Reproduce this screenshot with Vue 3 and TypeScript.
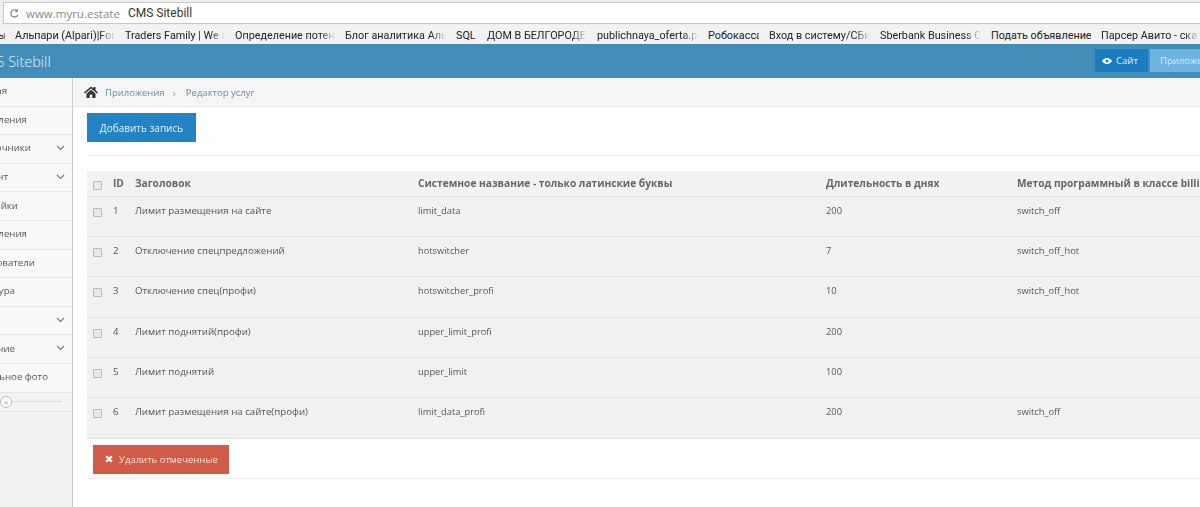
<script setup lang="ts">
interface MenuItem { label: string; end: number; chevron?: boolean }
const menu: MenuItem[] = [
  { label: 'Главная', end: 7 },
  { label: 'Объявления', end: 27 },
  { label: 'Справочники', end: 31, chevron: true },
  { label: 'Контент', end: 8, chevron: true },
  { label: 'Настройки', end: 18 },
  { label: 'Объявления', end: 27 },
  { label: 'Пользователи', end: 35 },
  { label: 'Структура', end: 15 },
  { label: '', end: 0, chevron: true },
  { label: 'Управление', end: 15, chevron: true },
  { label: 'Уникальное фото', end: 48 },
]
const bookmarks = [
  { t: 'ы', w: 5, fade: false },
  { t: 'Альпари (Alpari)|Forex', w: 100, fade: true },
  { t: 'Traders Family | We are', w: 100, fade: true },
  { t: 'Определение потенциала', w: 100, fade: true },
  { t: 'Блог аналитика Альфа', w: 101, fade: true },
  { t: 'SQL', w: 21, fade: false },
  { t: 'ДОМ В БЕЛГОРОДЕ', w: 100, fade: true },
  { t: 'publichnaya_oferta.pdf', w: 101, fade: true },
  { t: 'Робокасса', w: 51, fade: false },
  { t: 'Вход в систему/СБиС', w: 101, fade: true },
  { t: 'Sberbank Business Online', w: 101, fade: true },
  { t: 'Подать объявление', w: 100, fade: false },
  { t: 'Парсер Авито - скачать', w: 98, fade: true },
]
const rows = [
  ['1', 'Лимит размещения на сайте', 'limit_data', '200', 'switch_off'],
  ['2', 'Отключение спецпредложений', 'hotswitcher', '7', 'switch_off_hot'],
  ['3', 'Отключение спец(профи)', 'hotswitcher_profi', '10', 'switch_off_hot'],
  ['4', 'Лимит поднятий(профи)', 'upper_limit_profi', '200', ''],
  ['5', 'Лимит поднятий', 'upper_limit', '100', ''],
  ['6', 'Лимит размещения на сайте(профи)', 'limit_data_profi', '200', 'switch_off'],
]
</script>

<template>
  <div class="page">
    <div class="address">
      <div class="addr-box">
        <svg class="reload" width="11" height="11" viewBox="0 0 12 12"><path d="M9.600 7.600A4 4 0 1 1 8.800 3" fill="none" stroke="#777" stroke-width="1.200"/><path d="M9.600 0.800v3.400H6.400z" fill="#777"/></svg>
        <span class="url">www.myru.estate</span>
        <span class="title">CMS Sitebill</span>
      </div>
    </div>
    <div class="bookmarks">
      <span v-for="b in bookmarks" :key="b.t" class="bm" :class="{ fade: b.fade }" :style="{ width: b.w + 'px' }">{{ b.t }}</span>
    </div>
    <header class="navbar">
      <span class="brand">CMS Sitebill</span>
      <div class="nav-right">
        <span class="nav-site">
          <svg width="10" height="8" viewBox="0 0 10 8"><path d="M0 4C2.500 0 7.500 0 10 4C7.500 8 2.500 8 0 4Z" fill="#fff"/><circle cx="5" cy="4" r="1.500" fill="#1b7cc0"/></svg>
          Сайт
        </span>
        <span class="nav-app">Приложения</span>
      </div>
    </header>
    <div class="body">
      <aside class="sidebar">
        <div v-for="(m, i) in menu" :key="i" class="menu-item">
          <span class="menu-label" :style="{ width: m.end + 'px' }">{{ m.label }}</span>
          <svg v-if="m.chevron" class="chev" width="9" height="6" viewBox="0 0 9 6"><path d="M1 1l3.500 3.500L8 1" fill="none" stroke="#777" stroke-width="1.100"/></svg>
        </div>
        <div class="collapse">
          <span class="collapse-btn">«</span>
        </div>
      </aside>
      <main class="main">
        <div class="crumbs">
          <svg width="14" height="12" viewBox="0 0 14 12"><path d="M7 0.500L0 6.500l1 1L7 2.500l6 5 1-1-2.500-2.200V1h-2v1.600z" fill="#333"/><path d="M2.500 7.700L7 3.800l4.500 3.900V12H8.300V8.500H5.700V12H2.500z" fill="#333"/></svg>
          <span class="crumb first">Приложения</span>
          <span class="sep">›</span>
          <span class="crumb">Редактор услуг</span>
        </div>
        <div class="toolbar"><button class="btn-add">Добавить запись</button></div>
        <div class="content">
          <table class="grid">
            <colgroup>
              <col class="c1"><col class="c2"><col class="c3"><col class="c4"><col class="c5"><col class="c6">
            </colgroup>
            <thead>
              <tr>
                <th><span class="check"></span></th>
                <th>ID</th>
                <th>Заголовок</th>
                <th>Системное название - только латинские буквы</th>
                <th>Длительность в днях</th>
                <th>Метод программный в классе billing</th>
              </tr>
            </thead>
            <tbody>
              <tr v-for="r in rows" :key="r[0]">
                <td><span class="check"></span></td>
                <td>{{ r[0] }}</td>
                <td class="name">{{ r[1] }}</td>
                <td class="code">{{ r[2] }}</td>
                <td class="code">{{ r[3] }}</td>
                <td class="code">{{ r[4] }}</td>
              </tr>
            </tbody>
          </table>
          <div class="actions">
            <button class="btn-del">
              <svg width="8" height="8" viewBox="0 0 8 8"><path d="M1.200 1.200L6.800 6.800M6.800 1.200L1.200 6.800" stroke="#fff" stroke-width="2.200"/></svg>
              Удалить отмеченные
            </button>
          </div>
        </div>
      </main>
    </div>
  </div>
</template>

<style>
html, body { margin: 0; padding: 0; background: #fff; overflow: hidden; }
</style>

<style scoped>
.page { width: 1200px; height: 507px; overflow: hidden; font-family: "Open Sans", "Noto Sans", sans-serif; font-size: 10px; color: #555; display: flex; flex-direction: column; filter: blur(0.4px); }
.address { height: 25px; box-sizing: border-box; background: #eee; padding: 2px 0 0 3px; flex: none; }
.addr-box { height: 22px; box-sizing: border-box; background: #fff; border: 1px solid #c8c8c8; border-right: 0; display: flex; align-items: center; padding-left: 5px; }
.reload { margin-right: 6px; }
.url { font-size: 11.500px; color: #888; margin-right: 8px; }
.title { font-family: Roboto, sans-serif; font-size: 12px; color: #333; }
.bookmarks { height: 19px; box-sizing: border-box; padding-top: 2px; flex: none; background: #f2f2f2; display: flex; align-items: center; gap: 10px; overflow: hidden; white-space: nowrap; font-family: Roboto, sans-serif; font-size: 10.800px; color: #222; }
.bm { flex: none; overflow: hidden; }
.bm:first-child { text-indent: -2px; }
.fade { -webkit-mask-image: linear-gradient(to right, #000 85%, transparent); mask-image: linear-gradient(to right, #000 85%, transparent); }
.navbar { height: 34px; flex: none; background: #438eb9; display: flex; align-items: center; justify-content: space-between; }
.brand { font-size: 14.500px; color: #e4f0f7; margin-left: -25px; font-weight: 300; }
.nav-right { display: flex; align-items: stretch; height: 23px; gap: 2px; align-self: flex-end; margin-bottom: 6px; }
.nav-site { width: 53px; box-sizing: border-box; padding-right: 3px; background: #1b7cc0; color: #e4f0f7; font-size: 9.500px; display: flex; align-items: center; justify-content: center; gap: 4px; }
.nav-app { width: 50px; background: #6fb3e0; color: #d5e9f6; font-size: 9.500px; white-space: nowrap; overflow: hidden; padding-left: 10px; box-sizing: border-box; display: flex; align-items: center; }
.body { flex: 1; display: flex; min-height: 0; }
.sidebar { width: 73px; flex: none; box-sizing: border-box; background: #f2f2f2; border-right: 1px solid #ccc; }
.menu-item { height: 28.600px; box-sizing: border-box; background: #f8f8f8; border-bottom: 1px solid #e5e5e5; display: flex; align-items: center; padding-bottom: 2px; position: relative; color: #585858; font-size: 9.700px; }
.menu-label { display: flex; justify-content: flex-end; overflow: hidden; white-space: nowrap; }
.chev { position: absolute; left: 56px; top: 10px; }
.collapse { height: 19px; box-sizing: border-box; border-bottom: 1px solid #e5e5e5; display: flex; align-items: center; background: #f3f3f3; position: relative; }
.collapse::before { content: ""; position: absolute; left: 12px; right: 10px; top: 8px; border-top: 1px solid #ddd; }
.collapse-btn { width: 12px; height: 12px; border: 1px solid #bbb; border-radius: 50%; background: #fff; font-size: 9px; line-height: 9px; text-align: center; color: #aaa; box-sizing: border-box; }
.main { flex: 1; min-width: 0; overflow: hidden; }
.crumbs { height: 29px; box-sizing: border-box; background: #f5f5f5; border-bottom: 1px solid #e5e5e5; display: flex; align-items: center; padding-left: 11px; font-size: 9.500px; color: #6a8ca6; }
.crumb.first { margin-left: 7px; }
.sep { margin: 0 10px 0 8px; color: #aaa; font-size: 11px; }
.toolbar { height: 49px; box-sizing: border-box; margin-left: 14px; padding-top: 6px; border-bottom: 1px solid #eee; }
.btn-add { width: 109px; height: 29px; background: #2283c5; border: 0; color: #eaf4fb; font: 10px "Open Sans", sans-serif; padding: 0; display: block; }
.content { margin-left: 14px; padding-top: 15px; }
.grid { border-collapse: collapse; table-layout: fixed; width: 1225px; background: #f1f1f1; font-size: 9.600px; color: #555; }
.c1 { width: 21px; }
.c2 { width: 22px; }
.c3 { width: 283px; }
.c4 { width: 408px; }
.c5 { width: 191px; }
.c6 { width: 300px; }
.grid th { height: 25px; padding: 0 0 0 5px; text-align: left; font-weight: 700; color: #666; background: #f2f2f2; border-bottom: 1px solid #e2e2e2; box-sizing: border-box; font-size: 10.200px; white-space: nowrap; }
.grid td { height: 40.400px; padding: 7px 0 0 5px; vertical-align: top; box-sizing: border-box; border-bottom: 1px solid #e2e2e2; }
.grid td.name { font-size: 9.700px; }
.grid td.code { font-size: 9.300px; }
.grid th:first-child, .grid td:first-child { padding-left: 6px; }
.check { display: block; width: 9px; height: 9px; box-sizing: border-box; border: 1px solid #bbb; background: #e9e9e9; border-radius: 1px; margin-top: 4px; }
.actions { padding: 6px 0 0 6px; height: 40px; box-sizing: border-box; border-bottom: 1px solid #eee; width: 1225px; }
.btn-del { width: 136px; height: 29px; background: #d15b47; border: 0; color: #f8e3df; font: 9.500px "Open Sans", sans-serif; display: flex; align-items: center; justify-content: center; gap: 6px; padding: 0 0 0 1px; }
</style>
